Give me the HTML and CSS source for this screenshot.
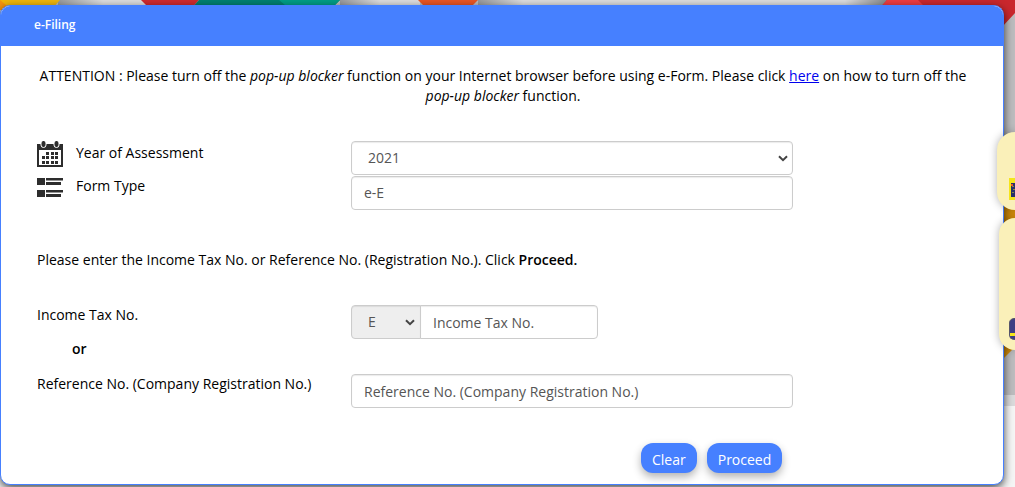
FILE: index.html
```html
<!DOCTYPE html>
<html lang="en">
<head>
<meta charset="utf-8">
<title>e-Filing</title>
<meta name="viewport" content="width=device-width, initial-scale=1">
<link rel="stylesheet" href="styles.css">
</head>
<body>
<svg class="backdrop" aria-hidden="true">
  <defs>
    <linearGradient id="grey"><stop offset="0" stop-color="#96989b"/><stop offset=".5" stop-color="#dcdcdd"/><stop offset="1" stop-color="#dcdcdd"/></linearGradient>
    <linearGradient id="dusk"><stop offset="0" stop-color="#dcdcdd"/><stop offset="1" stop-color="#85888b"/></linearGradient>
  </defs>
  <rect width="100%" height="406" fill="#bcbcbe"/>
  <rect y="395" width="100%" height="11" fill="#dadadb"/>
  <rect y="406" width="100%" height="200" fill="#f5f5f5"/>
  <rect x="58" width="90" height="10" fill="url(#grey)"/>
  <path d="M0 0H60L51 10H0z" fill="#efb50c"/>
  <path d="M0 0L12 10H0z" fill="#f39212"/>
  <path d="M141 0H199L190 10H151z" fill="#cf2a2e"/>
  <path d="M199 0H340L330 10H190z" fill="#00806f"/>
  <path d="M279 0H340L330 10H291z" fill="#009d86"/>
  <rect x="340" width="80" height="10" fill="url(#grey)"/>
  <path d="M418 0H478L468 10H428z" fill="#e95523"/>
  <rect x="478" width="90" height="10" fill="url(#grey)"/>
  <rect x="568" width="287" height="10" fill="#dcdcdd"/>
  <rect x="845" width="42" height="10" fill="url(#dusk)"/>
  <path d="M887 0H1015V13L990 40V10H878z" fill="#c9272d"/>
  <path d="M887 0H918L928 10H878z" fill="#ee3c41"/>
  <path d="M1000 190H1015V347L1000 362z" fill="#d18b0c"/>
</svg>

<main class="panel">
  <header class="panel-header"><h1 class="panel-title">e-Filing</h1></header>
  <form class="panel-body">
    <p class="notice">ATTENTION : Please turn off the <em>pop-up blocker</em> function on your Internet browser before using e-Form. Please click <a href="#help">here</a> on how to turn off the <em>pop-up blocker</em> function.</p>

    <div class="row">
      <label class="label label-first" for="year">
        <svg class="icon" viewBox="0 0 26 26" width="26" height="26" aria-hidden="true">
          <path fill="#2d2d2d" fill-rule="evenodd" d="M0 3H26V26H0zM2 9V24H24V9z"/>
          <g fill="#2d2d2d" stroke="#fff"><rect x="4" y="-.5" width="5" height="7" rx="2.500"/><rect x="17" y="-.5" width="5" height="7" rx="2.500"/></g>
          <path fill="#2d2d2d" d="M9 11h3v3H9zM14 11h3v3h-3zM18 11h3v3h-3zM5 15h3v3H5zM9 15h3v3H9zM14 15h3v3h-3zM18 15h3v3h-3zM5 20h3v3H5zM9 20h3v3H9zM14 20h3v3h-3zM18 20h3v3h-3z"/>
        </svg>
        <span class="label-text">Year of Assessment</span>
      </label>
      <div class="select-wrap">
        <select class="field select" id="year"><option>2021</option></select>
        <svg class="chevron" viewBox="0 0 10 7" aria-hidden="true"><path d="M1 1.200L5 5.200 9 1.200"/></svg>
      </div>
    </div>
    <div class="row">
      <label class="label" for="form-type">
        <svg class="icon icon-list" viewBox="0 0 26 19" width="26" height="19" aria-hidden="true">
          <path fill="#2d2d2d" d="M0 0h8v7H0zM9 0h17v2.500H9zM9 4h15v3H9zM0 12h8v7H0zM9 12h17v2.500H9zM9 16h15v3H9z"/>
        </svg>
        <span>Form Type</span>
      </label>
      <input class="field form-type" id="form-type" type="text" value="e-E">
    </div>

    <p class="instruction">Please enter the Income Tax No. or Reference No. (Registration No.). Click <strong>Proceed.</strong></p>

    <div class="row">
      <label class="label" for="tax-no">Income Tax No.</label>
      <div class="group">
        <div class="select-wrap prefix">
          <select class="field select" aria-label="Tax number prefix"><option>E</option></select>
          <svg class="chevron" viewBox="0 0 10 7" aria-hidden="true"><path d="M1 1.200L5 5.200 9 1.200"/></svg>
        </div>
        <input class="field tax-no" id="tax-no" type="text" placeholder="Income Tax No.">
      </div>
    </div>
    <p class="or">or</p>
    <div class="row">
      <label class="label" for="ref-no">Reference No. (Company Registration No.)</label>
      <input class="field" id="ref-no" type="text" placeholder="Reference No. (Company Registration No.)">
    </div>

    <div class="actions">
      <button class="button" type="reset">Clear</button>
      <button class="button" type="submit">Proceed</button>
    </div>
  </form>
</main>

<aside class="tab tab-top" aria-hidden="true">
  <svg class="tab-icon" viewBox="0 0 6 22"><path fill="#f5e51b" d="M0 0h6v22H0z"/><path fill="#27306b" d="M2 5h4v14H2z"/><path stroke="#8a8748" d="M3 8.500h2M4 11.500h2M3 14.500h2"/><path fill="#e85a24" d="M2 6h2v2H2z"/></svg>
</aside>
<aside class="tab tab-bottom" aria-hidden="true">
  <svg class="tab-icon" viewBox="0 0 6 22"><path fill="#3d3d83" stroke="#55556b" d="M7 .5H5Q.5 1 .5 5v12q0 4 4 4.500H7z"/><path fill="#f5e51b" d="M1 15h5v3H1z"/></svg>
</aside>
</body>
</html>
```

FILE: styles.css
```css
* { box-sizing: border-box; }

body {
  margin: 0;
  padding: 5px 11px 0 0;
  position: relative;
  overflow: hidden;
  min-height: 100vh;
  font: 14px/20px "Open Sans", sans-serif;
  color: #000;
}

.backdrop {
  position: absolute;
  inset: 0;
  width: 100%;
  height: 100%;
}

.panel {
  position: relative;
  background: #fff;
  border: 1px solid #4680ff;
  border-radius: 10px;
  overflow: hidden;
  box-shadow: 0 3px 9px rgba(0, 0, 0, .7);
}

.panel-header {
  padding: 9px 33px 11px;
  background: #4680ff;
}

.panel-title {
  margin: 0;
  font-size: 12px;
  line-height: 20px;
  font-weight: 600;
  color: #fff;
}

.panel-body { padding: 20px 34px 11px 36px; }

.notice {
  margin: 0 0 35px;
  text-align: center;
}

.notice a { color: #00e; }

.row {
  display: grid;
  grid-template-columns: 314px minmax(0, 442px);
  align-items: start;
  margin-bottom: 1px;
}

.label {
  display: flex;
  gap: 13px;
}

.label-first .label-text { padding-top: 2px; }
.icon { flex: none; }
.icon-list { margin-top: 2px; }

.field {
  display: block;
  width: 100%;
  height: 34px;
  padding: 6px 12px;
  border: 1px solid #ccc;
  border-radius: 4px;
  background: #fff;
  box-shadow: inset 0 1px 1px rgba(0, 0, 0, .08);
  color: #555;
  font: inherit;
}

.field::placeholder { color: #555; opacity: 1; }

.form-type { padding: 5px 12px 7px; }

.select {
  appearance: none;
  padding-left: 16px;
}

.select-wrap { position: relative; }

.chevron {
  position: absolute;
  top: 14px;
  right: 5px;
  width: 10px;
  height: 7px;
  fill: none;
  stroke: #444;
  stroke-width: 2;
  pointer-events: none;
}

.prefix .chevron { right: 6px; }

.instruction { margin: 40px 0 35px; }
.instruction strong, .or { font-weight: 600; }

.group { display: flex; }
.prefix { flex: none; width: 70px; }
.prefix .field {
  background: #eee;
  border-radius: 4px 0 0 4px;
}

.tax-no {
  width: 178px;
  margin-left: -1px;
  position: relative;
  border-radius: 0 4px 4px 0;
}

.or {
  margin: -1px 0 15px;
  padding-left: 35px;
}

.actions {
  display: flex;
  gap: 10px;
  padding: 34px 0 0 604px;
}

.button {
  height: 30px;
  padding: 3px 11px 0;
  border: 0;
  border-radius: 12px;
  background: #4680ff;
  color: #fff;
  font: inherit;
  box-shadow: 0 4px 8px rgba(0, 0, 0, .3);
}

.tab {
  position: absolute;
  right: 0;
  height: 78px;
  background: #faf0b9;
  box-shadow: 0 0 8px rgba(0, 0, 0, .3);
}

.tab-top {
  top: 132px;
  width: 18px;
  border-radius: 20px 0 0 20px;
}

.tab-bottom {
  top: 218px;
  width: 16px;
  height: 132px;
  border-radius: 20px 0 0 20px;
}

.tab-icon {
  position: absolute;
  right: 0;
  width: 6px;
  height: 22px;
}

.tab-top .tab-icon { top: 46px; }
.tab-bottom .tab-icon { top: 100px; }
```
